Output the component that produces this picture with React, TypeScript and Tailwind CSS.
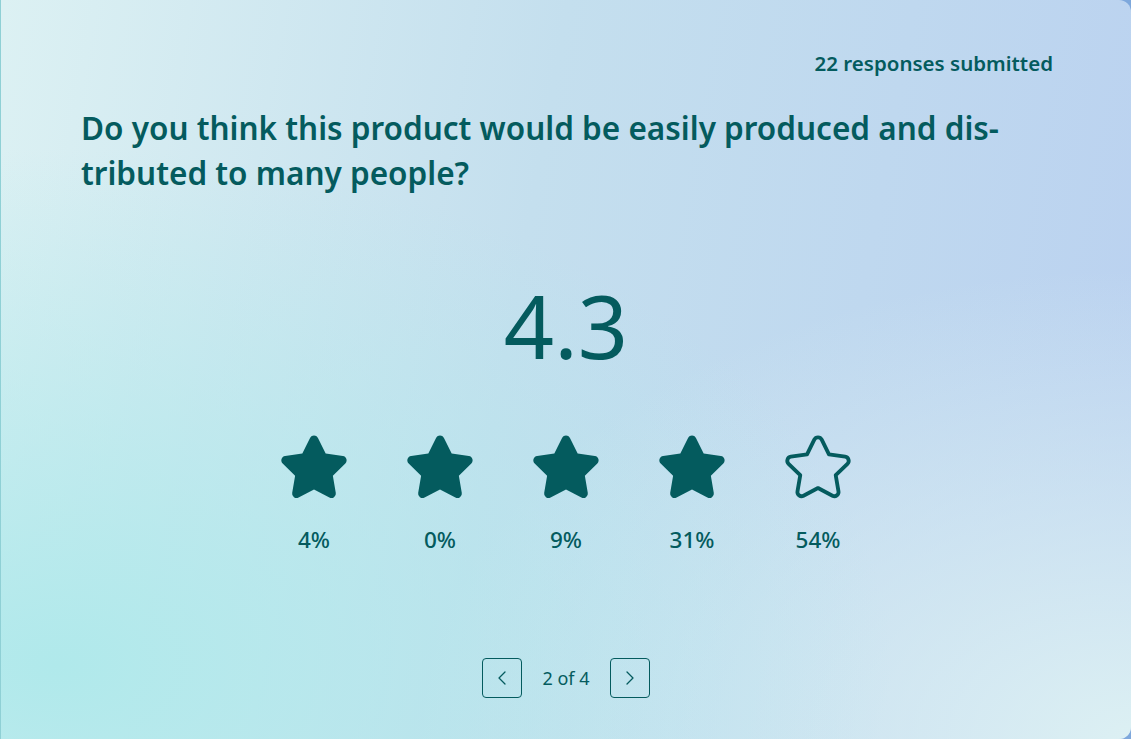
const STAR =
  "M10.79 3.1c.5-1 1.92-1 2.42 0l2.36 4.78 5.27.77c1.1.16 1.55 1.52.75 2.3l-3.82 3.72.9 5.25a1.35 1.35 0 0 1-1.96 1.42L12 18.86l-4.72 2.48a1.35 1.35 0 0 1-1.96-1.42l.9-5.25-3.81-3.72c-.8-.78-.36-2.14.75-2.3l5.27-.77 2.36-4.78Z";

const ratings = [
  { pct: "4%", filled: true },
  { pct: "0%", filled: true },
  { pct: "9%", filled: true },
  { pct: "31%", filled: true },
  { pct: "54%", filled: false },
];

function Star({ filled }: { filled: boolean }) {
  return (
    <svg width="68" height="66" viewBox="1.6 1.9 20.8 20.2" aria-hidden="true">
      {filled ? (
        <path d={STAR} fill="#045b5e" />
      ) : (
        <path d={STAR} fill="none" stroke="#045b5e" strokeWidth="1.25" strokeLinejoin="round" transform="translate(12 12) scale(0.94) translate(-12 -12)" />
      )}
    </svg>
  );
}

export default function App() {
  return (
    <div className="w-[1131px] h-[739px] bg-[#7ea8dc] overflow-hidden" style={{ fontFamily: '"Noto Sans", "Open Sans", sans-serif' }}>
      <div className="relative w-full h-full rounded-r-[12px] border-l border-[#8fd0d5] bg-[radial-gradient(ellipse_at_5%_90%,#b0e9eb_0%,rgba(176,233,235,0)_55%),radial-gradient(ellipse_at_100%_100%,#dcf0f3_0%,rgba(220,240,243,0)_45%),linear-gradient(100deg,#dcf1f3_0%,#c4dfee_45%,#bad1f0_100%)] text-[#045b5e] flex flex-col">
        <div className="flex justify-end pr-[78px] pt-[49px]">
          <span className="text-[20.5px] font-semibold leading-[28px]">22 responses submitted</span>
        </div>
        <h1 className="pl-[80px] mt-[28px] text-[31.5px] font-semibold leading-[45px]">
          <span className="block whitespace-nowrap">Do you think this product would be easily produced and dis-</span>
          <span className="block whitespace-nowrap">tributed to many people?</span>
        </h1>
        <div className="mt-[80px] flex justify-center">
          <span className="text-[88px] font-normal leading-[100px]">4.3</span>
        </div>
        <div className="mt-[59px] flex justify-center gap-[58px]">
          {ratings.map((r, i) => (
            <div key={i} className="flex flex-col items-center w-[68px]">
              <Star filled={r.filled} />
              <span className="mt-[25px] text-[22.5px] font-medium leading-[30px]">{r.pct}</span>
            </div>
          ))}
        </div>
        <div className="mt-[103px] flex justify-center items-center gap-[20px]">
          <button className="w-[40px] h-[40px] rounded-[4px] border border-[#045b5e] flex items-center justify-center">
            <svg width="14" height="16" viewBox="0 0 14 16" fill="none" stroke="#045b5e" strokeWidth="1.3" strokeLinecap="round" strokeLinejoin="round">
              <path d="M10 2 4 8l6 6" />
            </svg>
          </button>
          <span className="text-[18px] leading-[24px]">2 of 4</span>
          <button className="w-[40px] h-[40px] rounded-[4px] border border-[#045b5e] flex items-center justify-center">
            <svg width="14" height="16" viewBox="0 0 14 16" fill="none" stroke="#045b5e" strokeWidth="1.3" strokeLinecap="round" strokeLinejoin="round">
              <path d="M4 2l6 6-6 6" />
            </svg>
          </button>
        </div>
      </div>
    </div>
  );
}
